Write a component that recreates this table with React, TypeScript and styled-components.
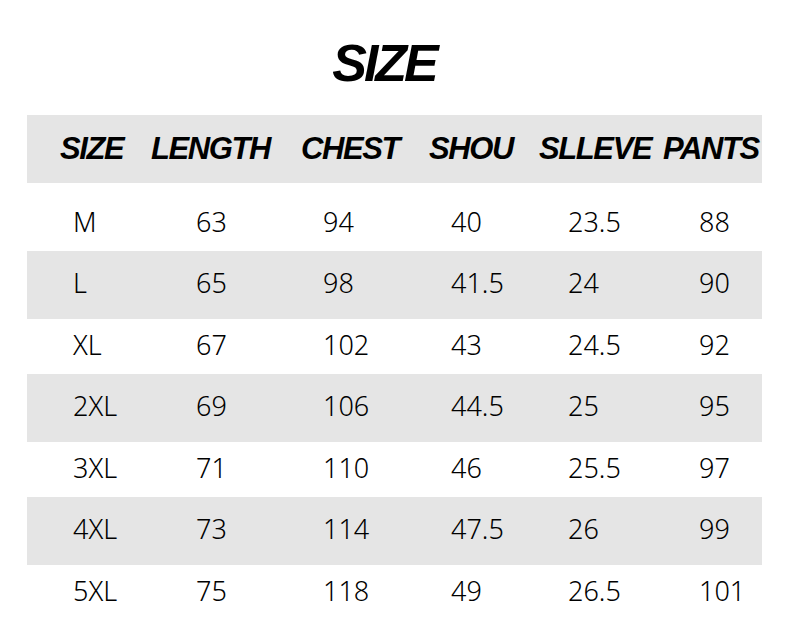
import React from "react";
import styled, { createGlobalStyle } from "styled-components";

const GlobalStyle = createGlobalStyle`
  html, body {
    margin: 0;
    padding: 0;
    background: #fff;
  }
`;

const Page = styled.div`
  width: 790px;
  height: 632px;
  overflow: hidden;
  background: #fff;
  padding-top: 37px;
  box-sizing: border-box;
`;

const Title = styled.h1`
  margin: 0 22px 0 0;
  text-align: center;
  font-family: "Liberation Sans", Arial, sans-serif;
  font-style: italic;
  font-weight: 700;
  font-size: 52px;
  line-height: 52px;
  letter-spacing: -3px;
  color: #000;
`;

const Table = styled.div`
  margin: 26px 28px 0 27px;
`;

const HeaderRow = styled.div`
  display: grid;
  grid-template-columns: 91px 150px 128px 110px 124px 1fr;
  align-items: center;
  height: 68px;
  padding-left: 33px;
  background: #e5e5e5;
`;

const HeaderCell = styled.div`
  font-family: "Liberation Sans", Arial, sans-serif;
  font-style: italic;
  font-weight: 700;
  font-size: 31px;
  letter-spacing: -1.4px;
  color: #000;
  white-space: nowrap;
`;

const Row = styled.div<{ $shaded: boolean; $height: number }>`
  display: grid;
  grid-template-columns: 123px 127px 128px 117px 131px 1fr;
  align-items: center;
  height: ${({ $height }) => $height}px;
  padding-left: 46px;
  padding-bottom: 5px;
  box-sizing: border-box;
  background: ${({ $shaded }) => ($shaded ? "#e5e5e5" : "transparent")};

  &:nth-child(2) {
    padding-top: 8px;
    padding-bottom: 0;
  }
`;

const Cell = styled.div`
  font-family: "Noto Sans", "Liberation Sans", sans-serif;
  font-size: 27px;
  font-weight: 300;
  color: #000;
  white-space: nowrap;
`;

const headers = ["SIZE", "LENGTH", "CHEST", "SHOU", "SLLEVE", "PANTS"];

const rows = [
  ["M", "63", "94", "40", "23.5", "88"],
  ["L", "65", "98", "41.5", "24", "90"],
  ["XL", "67", "102", "43", "24.5", "92"],
  ["2XL", "69", "106", "44.5", "25", "95"],
  ["3XL", "71", "110", "46", "25.5", "97"],
  ["4XL", "73", "114", "47.5", "26", "99"],
  ["5XL", "75", "118", "49", "26.5", "101"],
];

const rowHeight = (index: number) => {
  if (index === 0) return 68;
  return index % 2 === 1 ? 68 : 55;
};

const App: React.FC = () => {
  return (
    <Page>
      <GlobalStyle />
      <Title>SIZE</Title>
      <Table>
        <HeaderRow>
          {headers.map((h) => (
            <HeaderCell key={h}>{h}</HeaderCell>
          ))}
        </HeaderRow>
        {rows.map((row, index) => (
          <Row key={row[0]} $shaded={index % 2 === 1} $height={rowHeight(index)}>
            {row.map((value, i) => (
              <Cell key={i}>{value}</Cell>
            ))}
          </Row>
        ))}
      </Table>
    </Page>
  );
};

export default App;
